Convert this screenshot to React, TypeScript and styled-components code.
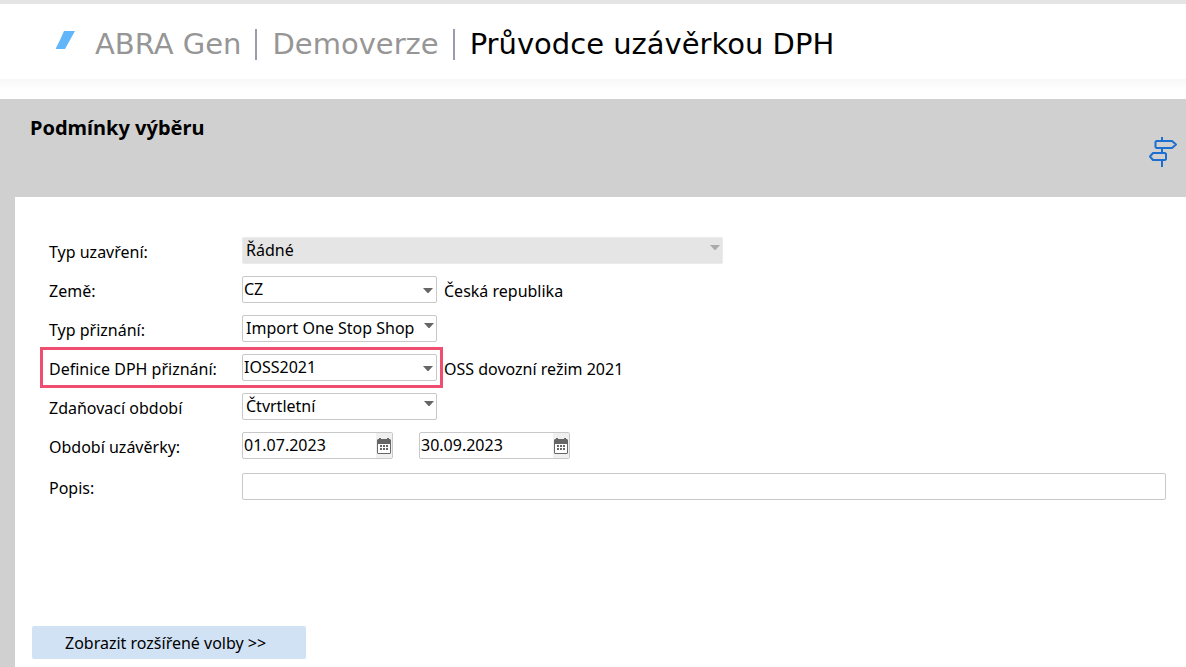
import React from "react";
import styled, { createGlobalStyle } from "styled-components";

const GlobalStyle = createGlobalStyle`
  *, *::before, *::after { box-sizing: border-box; }
  body {
    margin: 0;
    background: #fff;
    color: #000;
    font: 16px/24px "Noto Sans", sans-serif;
  }
`;

const Page = styled.div`
  display: flex;
  flex-direction: column;
  min-height: 100vh;
`;

const Header = styled.header`
  display: flex;
  align-items: center;
  height: 79px;
  padding-left: 55px;
  border-top: 4px solid #e5e5e5;
`;

const Logo = styled.svg`
  width: 20px;
  height: 20px;
  margin: 0 20px 4px 0;
`;

const Crumb = styled.span<{ $current?: boolean }>`
  padding: 0 14px 0 15px;
  border-left: 2px solid #9a9ab0;
  color: ${(p) => (p.$current ? "#000" : "#969696")};
  font: 29px/31px "DejaVu Sans", sans-serif;
  white-space: nowrap;

  &:first-child {
    padding-left: 0;
    border-left: 0;
  }
`;

const Crumbs = styled.nav`
  display: flex;
  padding-top: 6px;
`;

const HeaderShadow = styled.div`
  height: 20px;
  background: linear-gradient(#f7f7f7, #fff 12px);
`;

const Body = styled.main`
  display: flex;
  flex: 1;
  flex-direction: column;
  padding-left: 15px;
  background: #d0d0d0;
`;

const TitleBar = styled.div`
  display: flex;
  justify-content: space-between;
  height: 98px;
  padding: 16px 8px 0 15px;
`;

const Title = styled.h1`
  margin: 0;
  font: bold 20px/26px "Noto Sans", sans-serif;
`;

const GuideButton = styled.button`
  align-self: flex-start;
  width: 30px;
  height: 32px;
  margin-top: 21px;
  padding: 0;
  border: 0;
  background: none;
`;

const Panel = styled.form`
  display: flex;
  flex: 1;
  flex-direction: column;
  padding: 40px 20px 8px 17px;
  background: #fff;
`;

const Rows = styled.div`
  display: flex;
  flex-direction: column;
  gap: 12px;
  padding-left: 17px;
`;

const Row = styled.div<{ $spaced?: boolean }>`
  display: flex;
  min-height: 27px;
  margin-top: ${(p) => (p.$spaced ? "2px" : "0")};
`;

const MarkedField = styled.div`
  position: relative;
  display: flex;
  flex: none;

  &::after {
    content: "";
    position: absolute;
    inset: -7px -6px -7px -9px;
    border: 3px solid #f04e70;
    pointer-events: none;
  }
`;

const Label = styled.label`
  flex: none;
  width: 193px;
  padding-top: 3px;
  white-space: nowrap;
`;

const SelectBox = styled.div<{ $wide?: boolean }>`
  position: relative;
  width: ${(p) => (p.$wide ? "481px" : "195px")};
  height: 27px;
`;

const Select = styled.select<{ $inset?: boolean }>`
  appearance: none;
  width: 100%;
  height: 27px;
  padding: 0 14px 2px ${(p) => (p.$inset ? "3px" : "1px")};
  border: 1px solid #c8c8c8;
  border-radius: 2px;
  background: #fff;
  color: #000;
  font: inherit;

  &:disabled {
    border-color: #ebebeb;
    background: #e5e5e5;
    opacity: 1;
  }
`;

const Arrow = styled.svg<{ $high?: boolean; $pale?: boolean }>`
  position: absolute;
  top: ${(p) => (p.$high ? "8px" : "12px")};
  right: ${(p) => (p.$high ? "3px" : "4px")};
  width: 10px;
  height: 5px;
  fill: ${(p) => (p.$pale ? "#aaa" : "#666")};
  pointer-events: none;
`;

const Note = styled.span`
  padding: 3px 0 0 7px;
`;

const DateBox = styled.div`
  display: flex;
  width: 151px;
  height: 27px;
  margin-right: 26px;
  border: 1px solid #c8c8c8;
  border-radius: 2px;
`;

const DateInput = styled.input`
  flex: 1;
  min-width: 0;
  padding: 0 0 2px 1px;
  border: 0;
  background: none;
  font: inherit;
`;

const CalendarButton = styled.button`
  display: flex;
  align-items: center;
  justify-content: center;
  width: 16px;
  padding: 0;
  border: 0;
  background: #f0f0f0;
`;

const TextInput = styled.input`
  flex: 1;
  min-width: 0;
  height: 27px;
  padding: 0 4px;
  border: 1px solid #c8c8c8;
  border-radius: 2px;
  font: inherit;
`;

const MoreButton = styled.button`
  align-self: flex-start;
  min-width: 274px;
  height: 33px;
  margin-top: auto;
  padding: 0 33px;
  text-align: left;
  border: 0;
  border-radius: 2px;
  background: #d1e2f5;
  color: #000;
  font: inherit;
  white-space: nowrap;
`;

type DropDownProps = {
  id: string;
  value: string;
  list?: boolean;
  wide?: boolean;
  disabled?: boolean;
};

function DropDown({ id, value, list, wide, disabled }: DropDownProps) {
  return (
    <SelectBox $wide={wide}>
      <Select id={id} $inset={list} disabled={disabled} defaultValue={value}>
        <option>{value}</option>
      </Select>
      <Arrow $high={list} $pale={disabled} viewBox="0 0 10 5" aria-hidden="true">
        <path d="M0 0h10L5.5 5h-1z" />
      </Arrow>
    </SelectBox>
  );
}

function DateField({ id, value, label }: { id: string; value: string; label: string }) {
  return (
    <DateBox>
      <DateInput id={id} defaultValue={value} aria-label={label} />
      <CalendarButton type="button" aria-label="Kalendář">
        <svg width="14" height="16" viewBox="0 0 14 16" aria-hidden="true">
          <path d="M2 0h2v1h6V0h2v1h1l1 1v13l-1 1H1l-1-1V2l1-1h1z" fill="#666" />
          <path d="M1 6h12v9H1z" fill="#fff" />
          <path
            d="M3 7h2v2H3zM6 7h2v2H6zM9 7h2v2H9zM3 10h2v2H3zM6 10h2v2H6zM9 10h2v2H9z"
            fill="#666"
          />
        </svg>
      </CalendarButton>
    </DateBox>
  );
}

export default function App() {
  return (
    <>
      <GlobalStyle />
      <Page>
        <Header>
          <Logo viewBox="0 0 20 20" aria-hidden="true">
            <path d="M9 1h11L10 19H1V18L5 10z" fill="#61b6fa" />
          </Logo>
          <Crumbs>
            <Crumb>ABRA Gen</Crumb>
            <Crumb>Demoverze</Crumb>
            <Crumb $current>Průvodce uzávěrkou DPH</Crumb>
          </Crumbs>
        </Header>
        <HeaderShadow />
        <Body>
          <TitleBar>
            <Title>Podmínky výběru</Title>
            <GuideButton type="button" aria-label="Průvodce">
              <svg width="30" height="32" viewBox="0 0 30 32" fill="none" stroke="#1b6fd0" strokeWidth="2" strokeLinejoin="round">
                <path d="M14 1v3M14 12v4M14 24v7M8.500 5h15.500l4 3.500-4 3.500H8.500L7.500 11V6zM17 17H5L2 20.500 5 24h12l1-1v-5z" />
              </svg>
            </GuideButton>
          </TitleBar>
          <Panel>
            <Rows>
              <Row>
                <Label htmlFor="closing">Typ uzavření:</Label>
                <DropDown id="closing" value="Řádné" list wide disabled />
              </Row>
              <Row>
                <Label htmlFor="country">Země:</Label>
                <DropDown id="country" value="CZ" />
                <Note>Česká republika</Note>
              </Row>
              <Row>
                <Label htmlFor="return">Typ přiznání:</Label>
                <DropDown id="return" value="Import One Stop Shop" list />
              </Row>
              <Row>
                <MarkedField>
                  <Label htmlFor="definition">Definice DPH přiznání:</Label>
                  <DropDown id="definition" value="IOSS2021" />
                </MarkedField>
                <Note>OSS dovozní režim 2021</Note>
              </Row>
              <Row>
                <Label htmlFor="period">Zdaňovací období</Label>
                <DropDown id="period" value="Čtvrtletní" list />
              </Row>
              <Row>
                <Label htmlFor="from">Období uzávěrky:</Label>
                <DateField id="from" value="01.07.2023" label="Období uzávěrky od" />
                <DateField id="to" value="30.09.2023" label="Období uzávěrky do" />
              </Row>
              <Row $spaced>
                <Label htmlFor="note">Popis:</Label>
                <TextInput id="note" />
              </Row>
            </Rows>
            <MoreButton type="button">Zobrazit rozšířené volby &gt;&gt;</MoreButton>
          </Panel>
        </Body>
      </Page>
    </>
  );
}
